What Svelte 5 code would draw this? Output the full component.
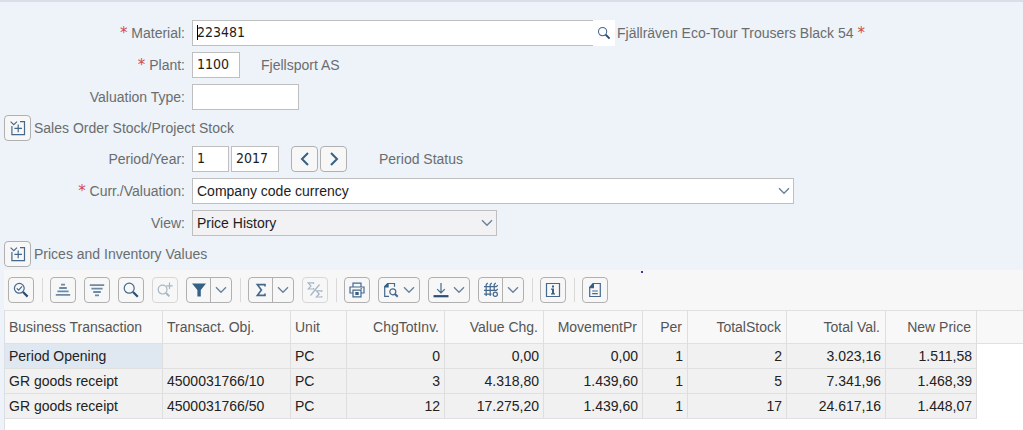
<script>
	const columns = [
		{title: 'Business Transaction', width: 158},
		{title: 'Transact. Obj.', width: 128},
		{title: 'Unit', width: 56},
		{title: 'ChgTotInv.', width: 98, num: true},
		{title: 'Value Chg.', width: 99, num: true},
		{title: 'MovementPr', width: 99, num: true},
		{title: 'Per', width: 45, num: true},
		{title: 'TotalStock', width: 99, num: true},
		{title: 'Total Val.', width: 99, num: true},
		{title: 'New Price', width: 91, num: true}
	];

	const rows = [
		['Period Opening', '', 'PC', '0', '0,00', '0,00', '1', '2', '3.023,16', '1.511,58'],
		['GR goods receipt', '4500031766/10', 'PC', '3', '4.318,80', '1.439,60', '1', '5', '7.341,96', '1.468,39'],
		['GR goods receipt', '4500031766/50', 'PC', '12', '17.275,20', '1.439,60', '1', '17', '24.617,16', '1.448,07']
	];

	let material = '223481';
	let plant = '1100';
	let valuationType = '';
	let period = '1';
	let year = '2017';
	let selected = 0;

	// split: separate arrow button, menu: arrow inside the same button
	const tools = [
		{icon: 'details', label: 'Details'},
		{sep: true},
		{icon: 'asc', label: 'Sort ascending'},
		{icon: 'desc', label: 'Sort descending'},
		{icon: 'find', label: 'Find'},
		{icon: 'findNext', label: 'Find next', disabled: true},
		{icon: 'filter', label: 'Filter', split: true},
		{sep: true},
		{icon: 'sum', label: 'Total', split: true},
		{icon: 'subtotal', label: 'Subtotals', disabled: true},
		{sep: true},
		{icon: 'print', label: 'Print'},
		{icon: 'views', label: 'Views', menu: true},
		{icon: 'export', label: 'Export', menu: true},
		{icon: 'layout', label: 'Layout', split: true},
		{sep: true},
		{icon: 'info', label: 'Information'},
		{sep: true},
		{icon: 'document', label: 'Accounting document'}
	];

	function shiftPeriod(step) {
		let p = Number(period) + step;
		let y = Number(year);
		if (p < 1) {
			p = 12;
			y -= 1;
		} else if (p > 12) {
			p = 1;
			y += 1;
		}
		period = String(p);
		year = String(y);
	}
</script>

<svelte:head>
	<title>Material Price Analysis</title>
</svelte:head>

{#snippet chevron()}
	<svg class="chevron" width="12" height="8" viewBox="0 0 12 8"><path d="M1 1.2 6 6.2 11 1.2" /></svg>
{/snippet}

{#snippet expand()}
	<svg class="icon" width="16" height="16" viewBox="0 0 16 16">
		<path d="M.6 1.6 3.8 4.6 7 1.6M1.9 6v8.6h12.6V1.6H10M8.2 4.6v7.6M4.4 8.4H12" />
	</svg>
{/snippet}

{#snippet glyph(name)}
	<svg class="icon" width="16" height="16" viewBox="0 0 16 16">
		{#if name === 'details'}
			<circle cx="6.3" cy="6.3" r="4.9" />
			<path d="M3.8 6.3 5.7 8.2 9 4.4" />
			<path class="heavy" d="m10 10 4.6 4.6" />
		{:else if name === 'asc'}
			<path class="bars" d="M6 2.6h4M4.2 6h7.6M2.4 9.4h11.2M.8 12.8h14.4" />
		{:else if name === 'desc'}
			<path class="bars" d="M.8 3.2h14.4M2.4 6.6h11.2M4.2 10h7.6M6 13.4h4" />
		{:else if name === 'find'}
			<circle cx="6.2" cy="6.2" r="5" />
			<path class="heavy" d="m10 10 4.8 4.8" />
		{:else if name === 'findNext'}
			<circle cx="5.6" cy="7.6" r="4.4" />
			<path class="thick" d="m9 11 3.4 3.4" />
			<path d="M12.5.6v6.4M9.3 3.8h6.4" />
		{:else if name === 'filter'}
			<path class="fill" d="M1 1.5h14L9.8 8v6.5H6.4V8z" />
		{:else if name === 'sum'}
			<path class="mid" d="M12 4.6V2.6H4.3L8.4 8l-4.1 5.4H12v-2" />
		{:else if name === 'subtotal'}
			<path d="M6.6 2V.9H1.2L4 4 1.2 7h5.4V6M14.8 10V8.9H9.4L12.2 12l-2.8 3h5.4v-1M12.5 2.5l-9 11" />
		{:else if name === 'print'}
			<path d="M4 4.8V1.2h8v3.6M4 11H1V5h14v6h-3M4 8.2h8v6.6H4z" />
			<path class="fill" d="M6.3 10h3.4v3H6.3zM11.5 6.2H13v1h-1.5z" />
		{:else if name === 'views'}
			<path d="M6 14.3H1.7V4.7L4.7 1.5h6.8v3.2" />
			<path class="fill" d="M1.2 5.4V4.3L4.7 1h1v4.4z" />
			<circle cx="9.8" cy="9.8" r="3" />
			<path class="thick" d="m12 12 2.7 2.7" />
		{:else if name === 'export'}
			<path d="M8 1v10M4.2 7.2 8 11l3.8-3.8" />
			<path class="heavy" d="M.5 14.2h15" />
		{:else if name === 'layout'}
			<path d="M4.7 1 3.2 2.5V14M8.7 1 7.2 2.5V14M12.7 1l-1.5 1.5V8M1 4.6h12.3l1.5-1.4M1 8.4h12.3L14.8 7M1 12.2h7.5" />
			<circle cx="12.3" cy="12.3" r="2.1" />
		{:else if name === 'info'}
			<path d="M1.5 1.5h13v13h-13z" />
			<path class="fill" d="M7 3.5h2v2H7zM6 6.6h3v4.6h1v1.2H6v-1.2h1V7.8H6z" />
		{:else if name === 'document'}
			<path d="M2.7 5.5 6.2 1.5h7.1v13H2.7zM5.2 9h5.6M5.2 11.6h5.6" />
			<path class="fill" d="M2.2 6.2V5.2L6 1h1v5.2z" />
		{/if}
	</svg>
{/snippet}

<main>
	<form class="selection" on:submit|preventDefault>
		<div class="row">
			<label for="material"><span class="req">*</span> Material:</label>
			<div class="material">
				<input id="material" bind:value={material} />
				<i class="caret"></i>
			</div>
			<button type="button" class="value-help" aria-label="Search material">
				<svg class="icon" width="14" height="14" viewBox="0 0 16 16">
					<circle cx="6.4" cy="6.4" r="4.7" />
					<path class="heavy" d="m10 10 4.4 4.4" />
				</svg>
			</button>
			<span class="name">Fjällräven Eco-Tour Trousers Black 54 <span class="req">*</span></span>
		</div>
		<div class="row">
			<label for="plant"><span class="req">*</span> Plant:</label>
			<input id="plant" class="short" bind:value={plant} />
			<span class="note">Fjellsport AS</span>
		</div>
		<div class="row">
			<label for="valtype">Valuation Type:</label>
			<input id="valtype" class="medium" bind:value={valuationType} />
		</div>

		<div class="section">
			<button type="button" class="tool" aria-label="Expand sales order stock">{@render expand()}</button>
			<span>Sales Order Stock/Project Stock</span>
		</div>

		<div class="row">
			<label for="period">Period/Year:</label>
			<input id="period" class="tiny" bind:value={period} />
			<input class="short year" aria-label="Year" bind:value={year} />
			<div class="pager">
				<button type="button" class="tool" aria-label="Previous period" on:click={() => shiftPeriod(-1)}>
					<svg class="icon arrow" width="16" height="16" viewBox="0 0 16 16"><path d="M11 2 5 8l6 6" /></svg>
				</button>
				<button type="button" class="tool" aria-label="Next period" on:click={() => shiftPeriod(1)}>
					<svg class="icon arrow" width="16" height="16" viewBox="0 0 16 16"><path d="m5 2 6 6-6 6" /></svg>
				</button>
			</div>
			<span class="status">Period Status</span>
		</div>
		<div class="row">
			<label for="currency"><span class="req">*</span> Curr./Valuation:</label>
			<div class="select wide">
				<select id="currency">
					<option>Company code currency</option>
				</select>
				{@render chevron()}
			</div>
		</div>
		<div class="row">
			<label for="view">View:</label>
			<div class="select">
				<select id="view" class="grey">
					<option>Price History</option>
				</select>
				{@render chevron()}
			</div>
		</div>

		<div class="section">
			<button type="button" class="tool" aria-label="Expand prices">{@render expand()}</button>
			<span>Prices and Inventory Values</span>
		</div>
	</form>

	<section class="alv">
		<i class="dot"></i>
		<div class="toolbar">
			{#each tools as tool}
				{#if tool.sep}
					<span class="sep"></span>
				{:else if tool.split}
					<div class="split">
						<button type="button" aria-label={tool.label}>{@render glyph(tool.icon)}</button>
						<button type="button" aria-label="{tool.label} menu">{@render chevron()}</button>
					</div>
				{:else}
					<button type="button" class="tool" class:menu={tool.menu} disabled={tool.disabled} aria-label={tool.label}>
						{@render glyph(tool.icon)}
						{#if tool.menu}{@render chevron()}{/if}
					</button>
				{/if}
			{/each}
		</div>

		<div class="grid">
			<table>
				<colgroup>
					{#each columns as col}
						<col style="width: {col.width}px" />
					{/each}
					<col />
				</colgroup>
				<thead>
					<tr>
						{#each columns as col}
							<th class:num={col.num}>{col.title}</th>
						{/each}
						<td class="rest"></td>
					</tr>
				</thead>
				<tbody>
					{#each rows as row, r}
						<tr on:click={() => (selected = r)}>
							{#each row as cell, c}
								<td class:num={columns[c].num} class:selected={c === 0 && r === selected}>{cell}</td>
							{/each}
							<td class="rest"></td>
						</tr>
					{/each}
				</tbody>
			</table>
		</div>
	</section>
</main>

<style>
	:global(body) {
		background: #fff;
	}
	main {
		min-height: 100vh;
		display: flex;
		flex-direction: column;
		background: #edf3f8;
		font-family: "Liberation Sans", Arial, sans-serif;
		font-size: 14px;
		color: #6a6d70;
	}
	.selection {
		border-top: 2px solid #d8dfe9;
		padding: 18px 0 3px 4px;
	}
	.row, .section {
		display: flex;
		align-items: center;
		height: 26px;
		white-space: nowrap;
	}
	.row + .row {
		margin-top: 6px;
	}
	.row + .section, .section + .row {
		margin-top: 5px;
	}
	.section {
		gap: 3px;
	}
	label {
		width: 181px;
		margin-right: 7px;
		flex: none;
		text-align: right;
	}
	.req {
		color: #d4474c;
		font-family: "DejaVu Sans", sans-serif;
		font-size: 15px;
		line-height: 14px;
	}
	input, select {
		box-sizing: border-box;
		height: 26px;
		margin: 0;
		border: 1px solid #bfbfbf;
		border-radius: 0;
		background: #fff;
		padding: 0 4px;
		color: #1c1c1c;
		font-size: 14px;
		outline: none;
	}
	input {
		padding-bottom: 2px;
		font-family: "DejaVu Sans Condensed", "Noto Sans", sans-serif;
	}
	select {
		width: 100%;
		appearance: none;
		font-family: inherit;
	}
	select.grey {
		background: #f2f2f5;
	}
	.material {
		position: relative;
		flex: 0 1 401px;
	}
	.material input {
		display: block;
		width: 100%;
		border-right: 0;
	}
	.caret {
		position: absolute;
		left: 5px;
		top: 5px;
		width: 1px;
		height: 15px;
		background: #000;
	}
	.value-help {
		display: flex;
		align-items: center;
		justify-content: center;
		width: 22px;
		height: 26px;
		padding: 0;
		border: 0;
		background: #fff;
	}
	.name {
		margin-left: 2px;
	}
	.tiny {
		width: 37px;
	}
	.short {
		width: 48px;
	}
	.year {
		margin-left: 2px;
	}
	.medium {
		width: 107px;
	}
	.note {
		margin-left: 21px;
	}
	.pager {
		display: flex;
		gap: 2px;
		margin-left: 12px;
	}
	.status {
		margin-left: 32px;
	}
	.select {
		position: relative;
		flex: 0 1 305px;
	}
	.select.wide {
		flex-basis: 602px;
	}
	.select .chevron {
		position: absolute;
		right: 4px;
		top: 9px;
		pointer-events: none;
	}
	svg {
		display: block;
		flex: none;
		fill: none;
		stroke: #44698d;
		stroke-width: 1.2;
	}
	.chevron {
		stroke: #6a8299;
		stroke-width: 1.4;
	}
	.icon .mid {
		stroke-width: 1.6;
	}
	.icon .thick {
		stroke-width: 2;
	}
	.icon .heavy {
		stroke-width: 2.2;
		stroke: #2b4f73;
	}
	.icon .bars {
		stroke-width: 1.8;
		stroke: #6b8aa6;
	}
	.icon .fill {
		fill: #346187;
		stroke: none;
	}
	.arrow {
		stroke: #346187;
		stroke-width: 2;
	}
	.tool, .split {
		box-sizing: border-box;
		display: flex;
		align-items: center;
		justify-content: center;
		width: 26px;
		height: 26px;
		border: 1px solid #b0b0b0;
		border-radius: 4px;
		background: #f7f7f8;
		padding: 0;
	}
	.section .tool, .pager .tool {
		width: 27px;
	}
	.tool.menu {
		width: 42px;
		gap: 4px;
	}
	.tool:disabled {
		opacity: 0.45;
	}
	.split {
		width: 46px;
		align-items: stretch;
	}
	.split button {
		display: flex;
		flex: 1;
		align-items: center;
		justify-content: center;
		padding: 0;
		border: 0;
		background: none;
	}
	.split button + button {
		flex: 0 0 21px;
		border-left: 1px solid #b0b0b0;
	}
	.alv {
		position: relative;
		flex: 1;
		display: flex;
		flex-direction: column;
		margin-left: 4px;
		background: #f7f7f7;
	}
	.dot {
		position: absolute;
		left: 637px;
		top: 1px;
		width: 2px;
		height: 2px;
		background: #3a36a0;
	}
	.toolbar {
		display: flex;
		align-items: center;
		gap: 8px;
		padding: 7px 4px;
	}
	.sep {
		width: 1px;
		height: 24px;
		margin-right: -1px;
		background: #d9d9d9;
	}
	.grid {
		flex: 1;
		border-left: 1px solid #d9dfe5;
		background: #fff;
		overflow: hidden;
	}
	table {
		width: 100%;
		table-layout: fixed;
		border-collapse: separate;
		border-spacing: 0;
		border-top: 1px solid #e0e0e0;
	}
	th, td {
		box-sizing: border-box;
		height: 25px;
		padding: 0 4px;
		border-right: 1px solid #dedede;
		border-bottom: 1px solid #e0e0e0;
		background: #f1f1f1;
		color: #222;
		font-weight: normal;
		text-align: left;
		white-space: nowrap;
	}
	th {
		height: 33px;
		background: #f8f8f8;
		color: #555;
	}
	.num {
		text-align: right;
	}
	th.num {
		padding-right: 5px;
	}
	td.selected {
		background: #dfe8f1;
	}
	.rest {
		border-right: 0;
	}
	thead .rest {
		background: #f8f8f8;
	}
	tbody .rest {
		border-bottom: 0;
		background: #fff;
	}
</style>
